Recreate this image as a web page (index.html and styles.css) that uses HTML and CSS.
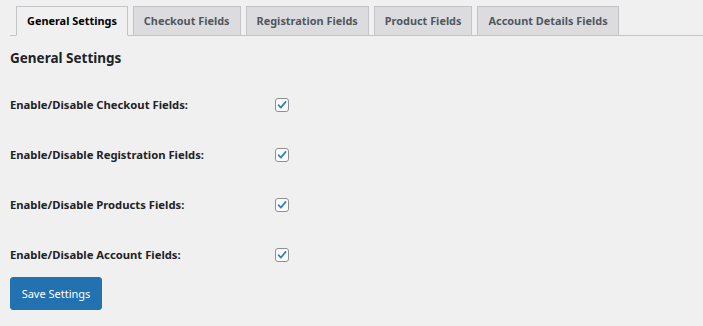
FILE: index.html
```html
<!DOCTYPE html>
<html lang="en">
<head>
    <meta charset="UTF-8">
    <meta name="viewport" content="width=device-width, initial-scale=1.0">
    <title>General Settings</title>
    <link rel="stylesheet" href="styles.css">
</head>
<body>

    <div class="wrap">
        <!-- Tabs -->
        <nav class="nav-tabs">
            <a href="#" class="nav-tab active">General Settings</a>
            <a href="#" class="nav-tab">Checkout Fields</a>
            <a href="#" class="nav-tab">Registration Fields</a>
            <a href="#" class="nav-tab">Product Fields</a>
            <a href="#" class="nav-tab">Account Details Fields</a>
        </nav>

        <h2 class="section-title">General Settings</h2>

        <form class="settings-form">
            <div class="fields">
                <div class="field-label">Enable/Disable Checkout Fields:</div>
                <div class="field-input"><span class="check"><svg viewBox="0 0 14 14" width="14" height="14"><path d="M3.6 7.2 L5.9 9.6 L10.6 3.9" fill="none" stroke="#3582c4" stroke-width="1.8" stroke-linecap="round" stroke-linejoin="round"/></svg></span></div>

                <div class="field-label">Enable/Disable Registration Fields:</div>
                <div class="field-input"><span class="check"><svg viewBox="0 0 14 14" width="14" height="14"><path d="M3.6 7.2 L5.9 9.6 L10.6 3.9" fill="none" stroke="#3582c4" stroke-width="1.8" stroke-linecap="round" stroke-linejoin="round"/></svg></span></div>

                <div class="field-label">Enable/Disable Products Fields:</div>
                <div class="field-input"><span class="check"><svg viewBox="0 0 14 14" width="14" height="14"><path d="M3.6 7.2 L5.9 9.6 L10.6 3.9" fill="none" stroke="#3582c4" stroke-width="1.8" stroke-linecap="round" stroke-linejoin="round"/></svg></span></div>

                <div class="field-label">Enable/Disable Account Fields:</div>
                <div class="field-input"><span class="check"><svg viewBox="0 0 14 14" width="14" height="14"><path d="M3.6 7.2 L5.9 9.6 L10.6 3.9" fill="none" stroke="#3582c4" stroke-width="1.8" stroke-linecap="round" stroke-linejoin="round"/></svg></span></div>
            </div>

            <button type="button" class="button-primary">Save Settings</button>
        </form>
    </div>

</body>
</html>
```

FILE: styles.css
```css
body {
    font-family: 'Noto Sans', sans-serif;
    background-color: #f0f0f1;
    color: #1d2327;
    margin: 0;
    padding: 0;
}

.wrap {
    padding: 6px 0 0 10px;
}

.nav-tabs {
    display: flex;
    gap: 5px;
    padding-left: 6px;
    border-bottom: 1px solid #c3c4c7;
}

.nav-tab {
    display: block;
    padding: 5px 10px;
    line-height: 18px;
    font-size: 10.9px;
    font-weight: bold;
    color: #50575e;
    background-color: #dcdcde;
    border: 1px solid #c3c4c7;
    margin-bottom: -1px;
    text-decoration: none;
}

.nav-tab.active {
    background-color: #f0f0f1;
    color: #000;
    border-bottom-color: #f0f0f1;
}

.section-title {
    font-size: 13.5px;
    line-height: 20px;
    margin: 12px 0 0;
    color: #1d2327;
}

.fields {
    display: grid;
    grid-template-columns: 265px auto;
    row-gap: 30px;
    margin-top: 27px;
}

.field-label {
    font-size: 11.25px;
    font-weight: bold;
    line-height: 20px;
}

.field-input {
    display: flex;
    align-items: center;
}

.check {
    display: block;
    width: 14px;
    height: 14px;
    box-sizing: border-box;
    background-color: #fff;
    border: 1px solid #8c8f94;
    border-radius: 3px;
    position: relative;
}

.check svg {
    position: absolute;
    left: -1px;
    top: -1px;
}

.button-primary {
    margin-top: 12px;
    width: 92px;
    height: 33px;
    padding: 0;
    background-color: #2271b1;
    color: #fff;
    border: 1px solid #2271b1;
    border-radius: 3px;
    font-family: 'Noto Sans', sans-serif;
    font-size: 11px;
    cursor: pointer;
}
```
